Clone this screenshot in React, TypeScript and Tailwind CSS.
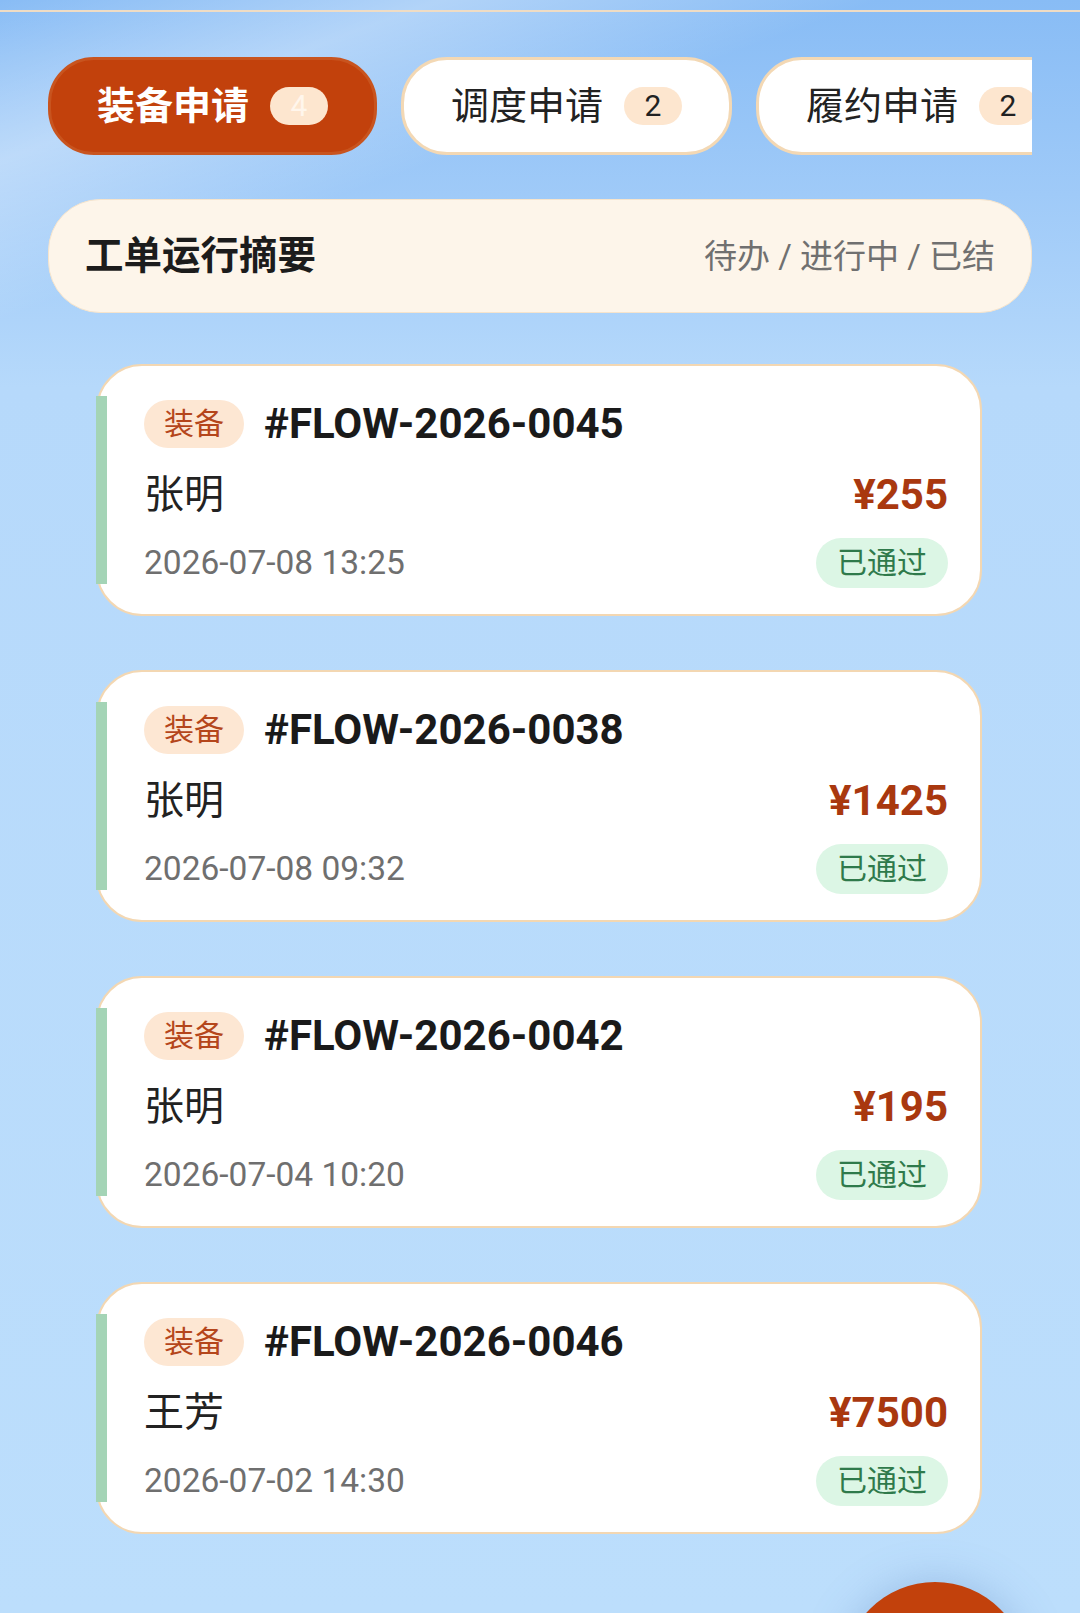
const orders = [
  { id: '#FLOW-2026-0045', name: '张明', amount: '¥255', time: '2026-07-08 13:25' },
  { id: '#FLOW-2026-0038', name: '张明', amount: '¥1425', time: '2026-07-08 09:32' },
  { id: '#FLOW-2026-0042', name: '张明', amount: '¥195', time: '2026-07-04 10:20' },
  { id: '#FLOW-2026-0046', name: '王芳', amount: '¥7500', time: '2026-07-02 14:30' },
];

const tabs = [
  { label: '装备申请', count: 4, active: true },
  { label: '调度申请', count: 2, active: false },
  { label: '履约申请', count: 2, active: false },
];

export default function App() {
  return (
    <div className="relative h-[1613px] overflow-hidden font-['Roboto','Noto_Sans_CJK_SC',sans-serif] bg-[linear-gradient(180deg,#88bcf5_0%,#9fcaf8_12%,#b6d9fb_24%,#bcdefc_100%)]">
      {/* light streaks in the sky */}
      <div className="absolute inset-0 bg-[linear-gradient(160deg,rgba(255,255,255,0)_0%,rgba(255,255,255,0.35)_8%,rgba(255,255,255,0)_16%)] pointer-events-none" />

      <div className="relative">
        <div className="h-[10px]" />
        <div className="h-[2px] bg-[#efdcc4]" />

        {/* tabs */}
        <div className="mt-[45px] mx-[48px] overflow-hidden">
          <div className="flex gap-[24px] w-max">
            {tabs.map(t => (
              <div
                key={t.label}
                className={`h-[98px] shrink-0 whitespace-nowrap flex items-center gap-[21px] rounded-[46px] border-[3px] ${t.active ? 'px-[46px] bg-[#c2410c] border-[#c8541f]' : 'px-[47px] bg-white border-[#f3d8b4]'}`}
              >
                <span className={`text-[38px] leading-none ${t.active ? 'font-bold text-white' : 'text-[#222]'}`}>{t.label}</span>
                <span className={`h-[38px] min-w-[58px] rounded-full flex items-center justify-center text-[30px] leading-none ${t.active ? 'bg-[#fde6cf] text-[#fff6ec]' : 'bg-[#fde6cf] text-[#222]'}`}>
                  {t.count}
                </span>
              </div>
            ))}
          </div>
        </div>

        {/* summary */}
        <div className="mt-[44px] mx-[48px] h-[114px] rounded-[52px] bg-[#fdf5ea] border border-[#f6e4cc] flex items-center justify-between px-[36px]">
          <span className="text-[38.5px] font-bold text-[#1c1c1c] leading-none">工单运行摘要</span>
          <span className="text-[33px] text-[#707070] leading-none">待办 / 进行中 / 已结</span>
        </div>

        {/* order cards */}
        <div className="mt-[51px] ml-[96px] mr-[98px] flex flex-col gap-[54px]">
          {orders.map(o => (
            <div key={o.id} className="h-[252px] bg-white rounded-[46px] border-2 border-[#f3d7b2] flex">
              <div className="w-[11px] -ml-[2px] my-[30px] bg-[#a4d4b6] shrink-0" />
              <div className="flex-1 pl-[37px] pr-[32px] pt-[34px]">
                <div className="h-[48px] flex items-center gap-[20px]">
                  <span className="h-[48px] w-[100px] rounded-full bg-[#fde7d3] text-[#b5461b] text-[30px] flex items-center justify-center leading-none">装备</span>
                  <span className="text-[42px] font-bold text-[#1a1a1a] leading-none">{o.id}</span>
                </div>
                <div className="mt-[22px] h-[50px] flex items-center justify-between">
                  <span className="text-[40px] text-[#222] leading-none">{o.name}</span>
                  <span className="text-[42px] font-bold text-[#a9380f] leading-none">{o.amount}</span>
                </div>
                <div className="mt-[18px] h-[50px] flex items-center justify-between">
                  <span className="text-[33.5px] text-[#6f6f6f] leading-none">{o.time}</span>
                  <span className="h-[50px] w-[132px] rounded-full bg-[#dcf6e5] text-[#2f7a4b] text-[30px] flex items-center justify-center leading-none">已通过</span>
                </div>
              </div>
            </div>
          ))}
        </div>
      </div>

      {/* floating action button */}
      <div className="absolute top-[1582px] right-[53px] w-[184px] h-[184px] rounded-full bg-[#c2410c] shadow-[0_0_40px_rgba(90,130,190,0.35)]" />
    </div>
  );
}
